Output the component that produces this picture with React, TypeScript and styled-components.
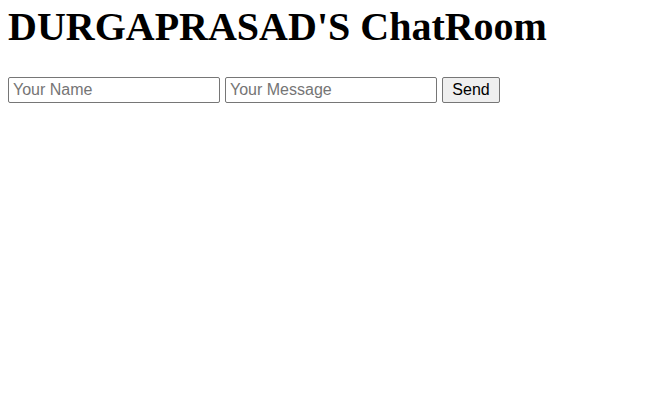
import React from "react";
import styled, { createGlobalStyle } from "styled-components";

const Global = createGlobalStyle`
  html, body { margin: 0; padding: 0; background: #ffffff; }
  body { padding: 8px; font-family: "Liberation Serif", "Times New Roman", serif; color: #000; }
`;

const Page = styled.div`
  display: flex;
  flex-direction: column;
  align-items: flex-start;
`;

const Title = styled.h1`
  margin: 0 0 32px 0;
  font-family: "Liberation Serif", "Times New Roman", serif;
  font-size: 40px;
  font-weight: bold;
  line-height: 37px;
  white-space: nowrap;
`;

const Form = styled.form`
  display: flex;
  align-items: center;
  gap: 5px;
`;

const Field = styled.input`
  box-sizing: border-box;
  width: 212px;
  height: 26px;
  margin: 0;
  padding: 1px 4px;
  font-family: "Liberation Sans", Arial, sans-serif;
  font-size: 16px;
  color: #000;
  border: 1px solid #767676;
  border-radius: 2px;
  background: #fff;
  &::placeholder { color: #757575; }
`;

const SendButton = styled.button`
  box-sizing: border-box;
  width: 58px;
  height: 26px;
  margin: 0;
  padding: 1px 0;
  font-family: "Liberation Sans", Arial, sans-serif;
  font-size: 16px;
  color: #000;
  background: #efefef;
  border: 1px solid #767676;
  border-radius: 2px;
`;

export default function App() {
  return (
    <>
      <Global />
      <Page>
        <Title>DURGAPRASAD'S ChatRoom</Title>
        <Form onSubmit={(e) => e.preventDefault()}>
          <Field placeholder="Your Name" />
          <Field placeholder="Your Message" />
          <SendButton type="submit">Send</SendButton>
        </Form>
      </Page>
    </>
  );
}
